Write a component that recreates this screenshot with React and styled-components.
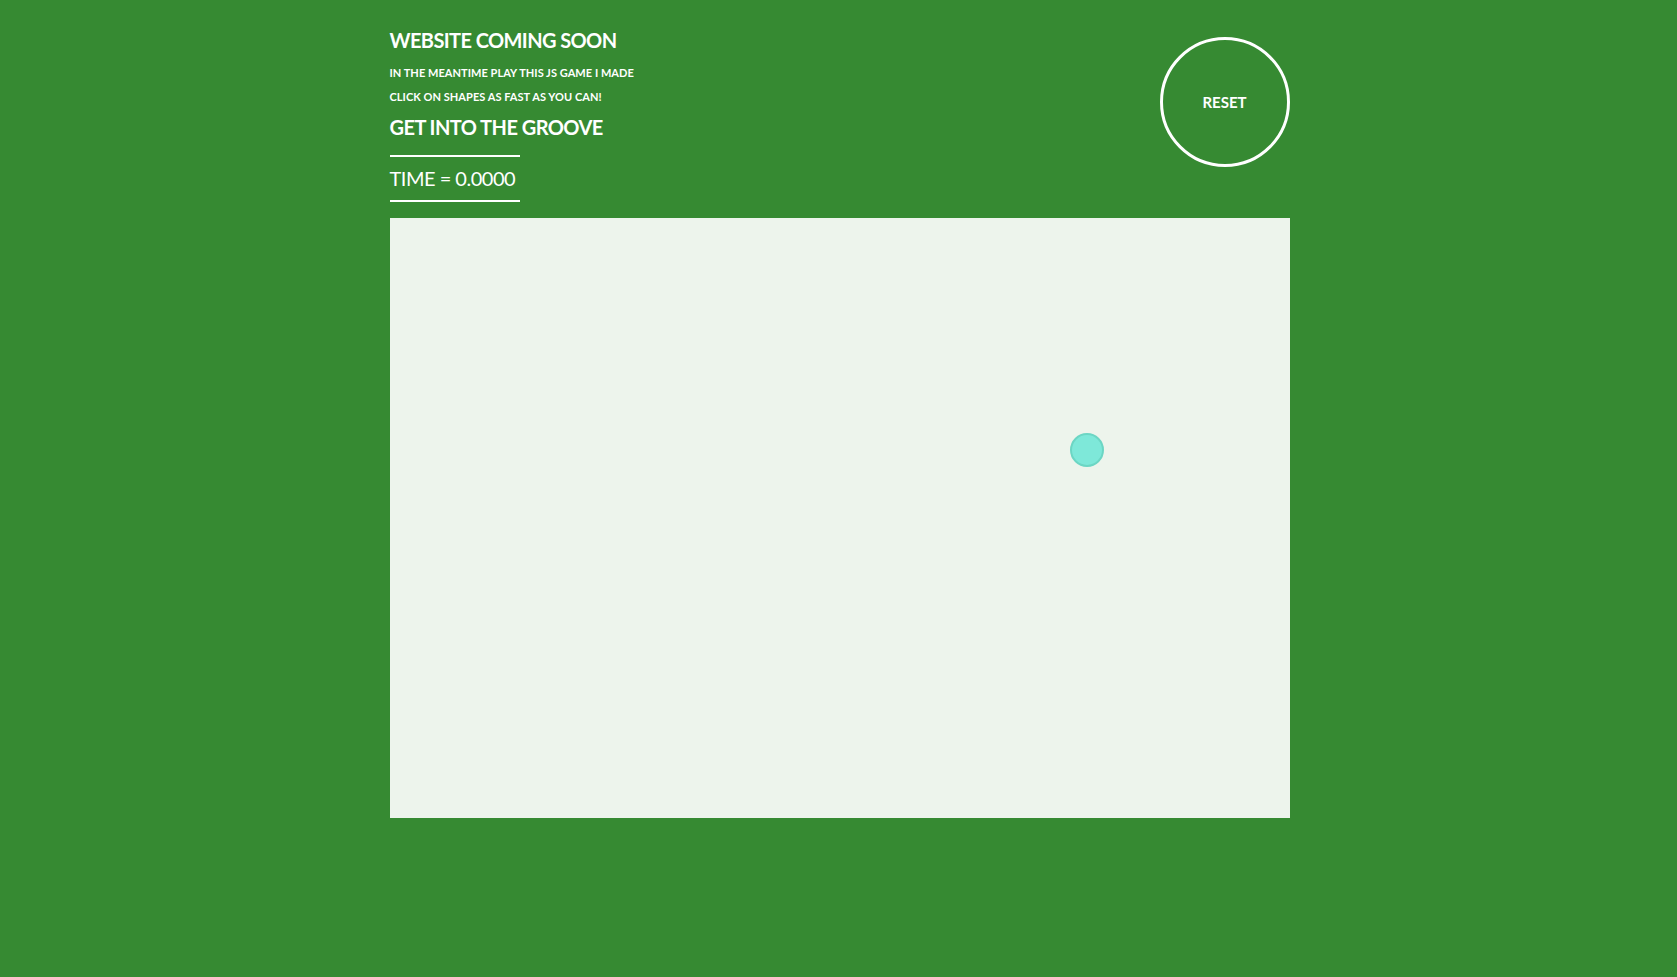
import React from "react";
import styled, { createGlobalStyle } from "styled-components";

const GlobalStyle = createGlobalStyle`
  html, body {
    margin: 0;
    padding: 0;
    background: #368a32;
    height: 100%;
  }
  body {
    font-family: Lato, "Open Sans", sans-serif;
    color: #ffffff;
    min-height: 977px;
  }
`;

const Page = styled.div`
  width: 900px;
  margin: 0 auto;
  padding-left: 2px;
  padding-top: 28px;
`;

const Header = styled.header`
  display: flex;
  justify-content: space-between;
  align-items: flex-start;
`;

const Intro = styled.div`
  display: flex;
  flex-direction: column;
  align-items: flex-start;
`;

const Title = styled.h1`
  margin: 0;
  font-size: 20px;
  line-height: 24px;
  font-weight: 700;
  letter-spacing: ${(p) => p.$spacing}px;
  margin-top: ${(p) => p.$gapAbove || 0}px;
  margin-bottom: ${(p) => p.$gapBelow || 0}px;
`;

const Sub = styled.p`
  margin: 0;
  font-size: 11px;
  line-height: 24px;
  font-weight: 700;
  letter-spacing: 0.05px;
`;

const Timer = styled.div`
  width: 130px;
  box-sizing: border-box;
  border-top: 2px solid #ffffff;
  border-bottom: 2px solid #ffffff;
  margin-top: 16px;
  padding: 9px 0 10px;
  font-size: 20px;
  line-height: 24px;
  font-weight: 400;
  letter-spacing: -0.5px;
`;

const ResetButton = styled.button`
  margin-top: 9px;
  width: 130px;
  height: 130px;
  border-radius: 50%;
  border: 3px solid #ffffff;
  background: transparent;
  color: #ffffff;
  font-family: Lato, "Open Sans", sans-serif;
  font-weight: 700;
  font-size: 15px;
  padding: 0;
  cursor: pointer;
  display: flex;
  align-items: center;
  justify-content: center;
`;

const Board = styled.div`
  position: relative;
  margin-top: 16px;
  width: 900px;
  height: 600px;
  background: #edf4ec;
`;

const Shape = styled.div`
  position: absolute;
  box-sizing: border-box;
  border-radius: 50%;
  background: #7ee8d9;
  border: 2px solid #6cd6c4;
`;

export default function App() {
  const shape = { left: 680, top: 215, size: 34 };
  return (
    <>
      <GlobalStyle />
      <Page>
        <Header>
          <Intro>
            <Title $spacing={-0.6} $gapBelow={9}>
              WEBSITE COMING SOON
            </Title>
            <Sub>IN THE MEANTIME PLAY THIS JS GAME I MADE</Sub>
            <Sub>CLICK ON SHAPES AS FAST AS YOU CAN!</Sub>
            <Title $spacing={-0.55} $gapAbove={6}>
              GET INTO THE GROOVE
            </Title>
            <Timer>TIME = 0.0000</Timer>
          </Intro>
          <ResetButton>RESET</ResetButton>
        </Header>
        <Board>
          <Shape
            style={{
              left: shape.left,
              top: shape.top,
              width: shape.size,
              height: shape.size,
            }}
          />
        </Board>
      </Page>
    </>
  );
}
